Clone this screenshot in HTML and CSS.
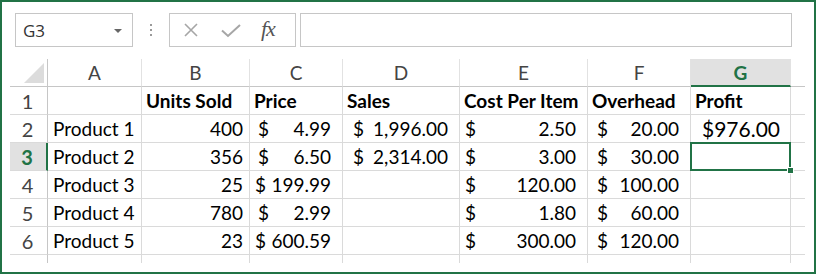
FILE: index.html
```html
<!DOCTYPE html>
<html>
<head>
<meta charset="utf-8">
<link rel="stylesheet" href="styles.css">
</head>
<body>
<div class="frame">
  <div class="toolbar">
    <div class="namebox"><span class="name">G3</span><span class="caret"></span></div>
    <div class="dots"><i></i><i></i><i></i></div>
    <div class="fbtns">
      <svg class="ico" width="16" height="16" viewBox="0 0 16 16"><path d="M2 2L14 14M14 2L2 14" stroke="#a6a6a6" stroke-width="1.6" fill="none"/></svg>
      <svg class="ico" width="22" height="16" viewBox="0 0 22 16"><path d="M2 8.5L8 14L20 3" stroke="#a6a6a6" stroke-width="2" fill="none"/></svg>
      <span class="fx">fx</span>
    </div>
    <div class="finput"></div>
  </div>
  <div class="sheet">
    <div class="h corner"></div>
    <div class="h">A</div><div class="h">B</div><div class="h">C</div><div class="h">D</div><div class="h">E</div><div class="h">F</div><div class="h hsel">G</div><div class="h hlast"></div>

    <div class="r">1</div>
    <div class="c"></div><div class="c b">Units Sold</div><div class="c b">Price</div><div class="c b">Sales</div><div class="c b">Cost Per Item</div><div class="c b">Overhead</div><div class="c b">Profit</div><div class="c last"></div>

    <div class="r">2</div>
    <div class="c">Product 1</div><div class="c num">400</div>
    <div class="c acct pc"><span>$</span><span>4.99</span></div>
    <div class="c acct pd"><span>$</span><span>1,996.00</span></div>
    <div class="c acct pe"><span>$</span><span>2.50</span></div>
    <div class="c acct pf"><span>$</span><span>20.00</span></div>
    <div class="c big">$976.00</div><div class="c last"></div>

    <div class="r rsel">3</div>
    <div class="c">Product 2</div><div class="c num">356</div>
    <div class="c acct pc"><span>$</span><span>6.50</span></div>
    <div class="c acct pd"><span>$</span><span>2,314.00</span></div>
    <div class="c acct pe"><span>$</span><span>3.00</span></div>
    <div class="c acct pf"><span>$</span><span>30.00</span></div>
    <div class="c sel"><span class="handle"></span></div><div class="c last"></div>

    <div class="r">4</div>
    <div class="c">Product 3</div><div class="c num">25</div>
    <div class="c acct pc2"><span>$</span><span>199.99</span></div>
    <div class="c"></div>
    <div class="c acct pe"><span>$</span><span>120.00</span></div>
    <div class="c acct pf"><span>$</span><span>100.00</span></div>
    <div class="c"></div><div class="c last"></div>

    <div class="r">5</div>
    <div class="c">Product 4</div><div class="c num">780</div>
    <div class="c acct pc"><span>$</span><span>2.99</span></div>
    <div class="c"></div>
    <div class="c acct pe"><span>$</span><span>1.80</span></div>
    <div class="c acct pf"><span>$</span><span>60.00</span></div>
    <div class="c"></div><div class="c last"></div>

    <div class="r">6</div>
    <div class="c">Product 5</div><div class="c num">23</div>
    <div class="c acct pc2"><span>$</span><span>600.59</span></div>
    <div class="c"></div>
    <div class="c acct pe"><span>$</span><span>300.00</span></div>
    <div class="c acct pf"><span>$</span><span>120.00</span></div>
    <div class="c"></div><div class="c last"></div>

    <div class="r tail"></div>
    <div class="c tail"></div><div class="c tail"></div><div class="c tail"></div><div class="c tail"></div><div class="c tail"></div><div class="c tail"></div><div class="c tail"></div><div class="c tail last"></div>
  </div>
</div>
</body>
</html>
```

FILE: styles.css
```css
* { box-sizing: border-box; }
html, body { margin: 0; padding: 0; background: #fff; }
body { width: 816px; height: 274px; overflow: hidden; font-family: Lato, "Noto Sans", sans-serif; color: #000; }

.frame {
  width: 816px;
  height: 274px;
  border: 2px solid #217346;
  padding: 11px 0 0 13px;
}

.toolbar {
  display: flex;
  align-items: center;
  height: 34px;
}
.namebox {
  width: 118px;
  height: 34px;
  border: 1px solid #c6c6c6;
  display: flex;
  align-items: center;
  justify-content: space-between;
  padding: 0 10px 0 7px;
}
.name { font-family: "Open Sans", "Noto Sans", sans-serif; font-size: 17px; color: #333; }
.caret {
  width: 0; height: 0;
  border-left: 4px solid transparent;
  border-right: 4px solid transparent;
  border-top: 4px solid #666;
  margin-top: 1px;
}
.dots {
  width: 36px;
  display: flex;
  flex-direction: column;
  align-items: center;
  gap: 3px;
}
.dots i { display: block; width: 2px; height: 2px; background: #9a9a9a; }
.fbtns {
  width: 127px;
  height: 34px;
  border: 1px solid #c6c6c6;
  display: flex;
  align-items: center;
  padding-left: 13px;
}
.fbtns .ico { display: block; }
.fbtns .ico + .ico { margin-left: 21px; }
.fx {
  margin-left: 19px;
  font-family: "Liberation Serif", "DejaVu Serif", serif;
  font-style: italic;
  font-size: 22px;
  color: #555;
  letter-spacing: -1px;
  margin-top: -2px;
}
.finput {
  margin-left: 4px;
  width: 492px;
  height: 34px;
  border: 1px solid #c6c6c6;
}

.sheet {
  margin: 12px 0 0 -5px;
  display: grid;
  grid-template-columns: 38px 94px 108px 93px 117px 128px 103px 100px 14px;
  grid-template-rows: 28px repeat(6, 28px) 8px;
  font-size: 19px;
}
.h, .r, .c {
  border-right: 1px solid #dadada;
  border-bottom: 1px solid #dadada;
  display: flex;
  align-items: center;
  white-space: nowrap;
}
.h {
  justify-content: center;
  color: #444;
  border-right-color: #e2e2e2;
  border-bottom-color: #c6c6c6;
  font-size: 19px;
}
.corner { position: relative; border-right-color: #c6c6c6; }
.corner::after {
  content: "";
  position: absolute;
  right: 3px;
  bottom: 3px;
  width: 0; height: 0;
  border-left: 20px solid transparent;
  border-bottom: 20px solid #dcdcdc;
}
.hsel {
  background: #e1e1e1;
  color: #217346;
  font-weight: bold;
  border-bottom: 2px solid #217346;
}
.hlast { border-right: none; }
.r {
  justify-content: center;
  color: #444;
  border-right-color: #c6c6c6;
  padding-right: 2px;
  font-size: 20px;
}
.rsel {
  background: #e1e1e1;
  color: #217346;
  font-weight: bold;
  border-right: 2px solid #217346;
}
.c { padding: 0 5px; }
.c.b { font-weight: bold; padding-left: 4px; }
.c.num { justify-content: flex-end; padding-right: 6px; }
.c.acct { justify-content: space-between; padding-right: 11px; }
.pc { padding-left: 8px; }
.pc2 { padding-left: 5px; }
.pc2 span:first-child { margin-right: 2px; }
.pd { padding-left: 10px; }
.pe { padding-left: 5px; }
.pf { padding-left: 9px; }
.c.big { font-size: 21px; padding-left: 11px; }
.c.last { border-right: none; }
.tail { border-bottom: none; }
.r.tail { border-right-color: #c6c6c6; }

.sel { position: relative; }
.sel::before {
  content: "";
  position: absolute;
  left: -1px;
  top: -1px;
  right: -1px;
  bottom: -1px;
  border: 2px solid #217346;
}
.handle {
  position: absolute;
  right: -4px;
  bottom: -4px;
  width: 7px;
  height: 7px;
  background: #217346;
  border: 1px solid #fff;
  z-index: 2;
}
```
